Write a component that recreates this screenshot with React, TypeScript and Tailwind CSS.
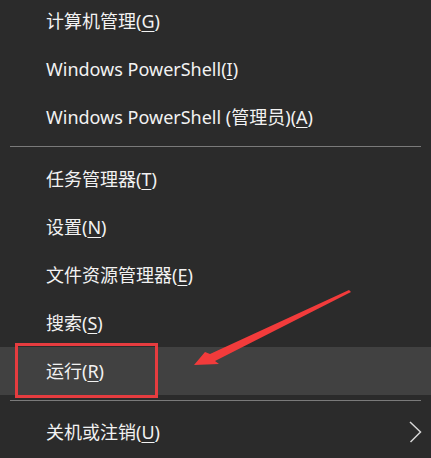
import React from 'react';

type Item = { label: string; key: string; tail?: string; active?: boolean; sub?: boolean };

const groups: Item[][] = [
    [
        { label: '计算机管理(', key: 'G', tail: ')' },
        { label: 'Windows PowerShell(', key: 'I', tail: ')' },
        { label: 'Windows PowerShell (管理员)(', key: 'A', tail: ')' },
    ],
    [
        { label: '任务管理器(', key: 'T', tail: ')' },
        { label: '设置(', key: 'N', tail: ')' },
        { label: '文件资源管理器(', key: 'E', tail: ')' },
        { label: '搜索(', key: 'S', tail: ')' },
        { label: '运行(', key: 'R', tail: ')', active: true },
    ],
    [{ label: '关机或注销(', key: 'U', tail: ')', sub: true }],
];

function Row({ item }: { item: Item }) {
    return (
        <div className={`h-12 flex items-center pl-[46px] pr-[9px] ${item.active ? 'bg-[#414141]' : ''}`}>
            <span className="flex-1 text-[18px] text-[#f2f2f2] leading-none">
                {item.label}
                <span className="underline underline-offset-[3px] decoration-1">{item.key}</span>
                {item.tail}
            </span>
            {item.sub && (
                <svg width="14" height="22" viewBox="0 0 14 22" className="text-[#d6d6d6]">
                    <path d="M2 1l10.5 10L2.5 21" fill="none" stroke="currentColor" strokeWidth={1.5} />
                </svg>
            )}
        </div>
    );
}

export default function App() {
    return (
        <div
            className="relative w-[431px] h-[458px] overflow-hidden bg-[#2b2b2b]"
            style={{ fontFamily: '"Segoe UI", "Noto Sans", "Noto Sans CJK SC", sans-serif' }}
        >
            <div className="flex flex-col -mt-[3px]">
                {groups.map((group, gi) => (
                    <React.Fragment key={gi}>
                        {gi > 0 && (
                            <div className={`${gi === 1 ? 'pt-[5px] pb-[8px]' : 'pt-[5px] pb-[7px]'} px-[10px]`}>
                                <div className="h-px bg-[#7a7a7a]" />
                            </div>
                        )}
                        {group.map((item) => (
                            <Row key={item.key} item={item} />
                        ))}
                    </React.Fragment>
                ))}
            </div>

            {/* annotation: red box */}
            <div className="absolute left-[15px] top-[343px] w-[143px] h-[55px] border-[3px] border-[#e63c3f]" />

            {/* annotation: arrow */}
            <svg className="absolute left-0 top-0" width="431" height="458" viewBox="0 0 431 458">
                <polygon
                    points="194,365 205,352 210,354 349,290 351,292 215,361 219,364"
                    fill="#f23b3b"
                />
            </svg>
        </div>
    );
}
